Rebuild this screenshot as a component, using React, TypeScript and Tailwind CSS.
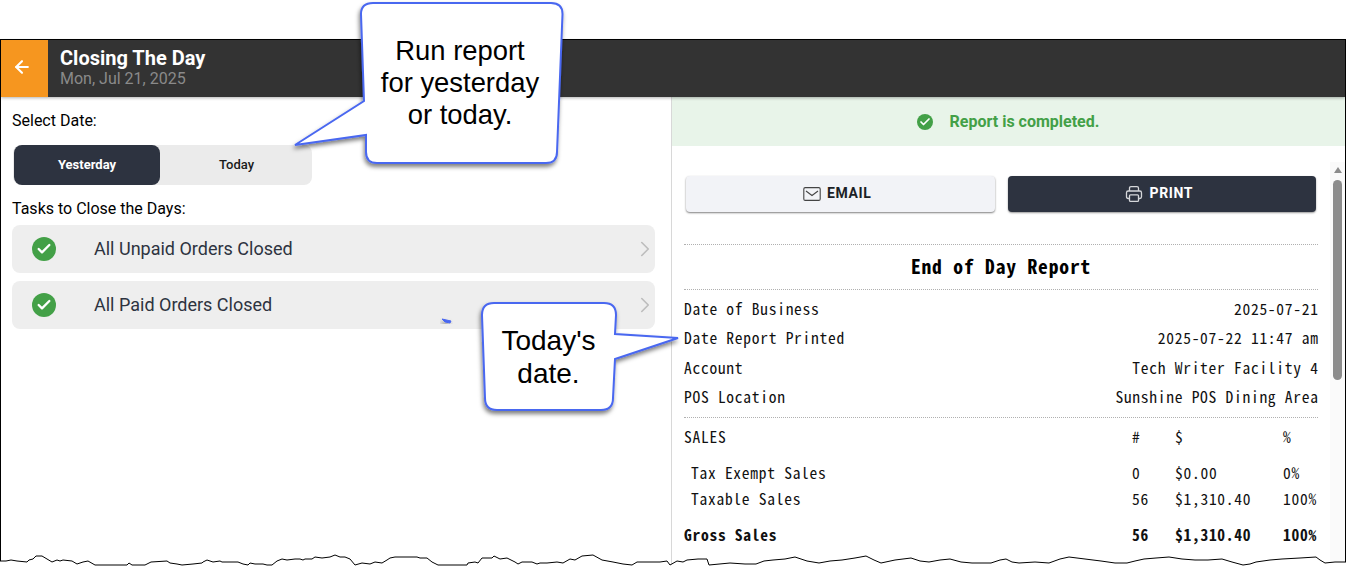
import { ArrowLeft, ChevronRight, Check } from "lucide-react";

const mono = "[font-family:'Noto_Sans_Mono_CJK_SC','DejaVu_Sans_Mono',monospace]";

function CheckBadge({ size }: { size: "lg" | "sm" }) {
  return (
    <span
      className={
        size === "lg"
          ? "flex h-6 w-6 items-center justify-center rounded-full bg-[#43a047]"
          : "flex h-4 w-4 items-center justify-center rounded-full bg-[#43a047]"
      }
    >
      <Check className={size === "lg" ? "h-4 w-4 text-white" : "h-3 w-3 text-white"} strokeWidth={3.5} />
    </span>
  );
}

function Task({ label }: { label: string }) {
  return (
    <div className="flex h-12 items-center rounded-lg bg-[#eeeeee] pl-5">
      <CheckBadge size="lg" />
      <span className="ml-[38px] flex-1 pb-[2px] text-[18px] text-[#2d3340]">{label}</span>
      <ChevronRight className="-mr-[3px] h-[26px] w-[26px] text-[#bdbdbd]" strokeWidth={1.5} />
    </div>
  );
}

function Row({ a, b }: { a: string; b: string }) {
  return (
    <div className="flex h-[29.3px] items-center justify-between">
      <span>{a}</span>
      <span className="-mr-[0.7px]">{b}</span>
    </div>
  );
}

function Sales({ a, n, d, p, cls }: { a: string; n: string; d: string; p: string; cls: string }) {
  return (
    <div className={`grid grid-cols-[448px_43px_108px_1fr] items-center ${cls}`}>
      <span>{a}</span>
      <span>{n}</span>
      <span>{d}</span>
      <span>{p}</span>
    </div>
  );
}

const torn =
  "M0 561 L6 561 L11 560 L17 561 L27 562 L29 560 L33 559 L36 556 L42 556 L47 559 L52 562 L57 560 L60 561 L63 560 L72 561 L77 564 L83 562 L88 561 L95 565 L127 565 L129 563 L132 565 L145 565 L151 562 L167 561 L170 563 L177 564 L182 565 L193 564 L202 563 L203 562 L207 560 L213 562 L220 561 L222 562 L238 562 L243 564 L248 565 L250 563 L255 564 L263 564 L267 565 L272 565 L277 561 L282 559 L287 560 L295 559 L300 559 L303 560 L305 559 L312 559 L315 557 L322 558 L330 557 L335 555 L340 557 L345 557 L350 559 L355 565 L362 563 L370 564 L375 562 L382 563 L387 560 L390 558 L395 557 L400 557 L417 557 L420 558 L427 558 L432 562 L438 565 L467 565 L468 563 L475 562 L478 563 L482 558 L492 558 L494 556 L500 559 L507 558 L515 562 L518 564 L522 562 L532 562 L537 564 L540 563 L547 563 L557 562 L563 563 L570 559 L575 560 L582 556 L593 555 L602 560 L613 562 L623 564 L632 565 L637 562 L660 562 L667 561 L670 565 L677 561 L683 562 L687 560 L698 559 L707 559 L709 565 L730 563 L745 564 L756 564 L764 561 L773 560 L785 559 L795 557 L807 561 L819 563 L830 561 L842 560 L855 558 L866 556 L874 560 L881 563 L895 560 L911 558 L920 561 L929 562 L940 560 L950 559 L961 562 L972 563 L991 563 L1000 560 L1006 559 L1012 562 L1019 563 L1035 562 L1049 563 L1060 559 L1069 557 L1085 559 L1101 561 L1115 563 L1127 563 L1135 561 L1144 559 L1156 558 L1169 557 L1182 559 L1195 560 L1208 560 L1222 559 L1232 562 L1243 565 L1250 564 L1256 562 L1270 560 L1282 559 L1300 558 L1316 557 L1320 560 L1325 563 L1335 562 L1346 562";

export default function App() {
  return (
    <div className="relative h-[566px] w-[1346px] overflow-hidden bg-white font-['Roboto',sans-serif] text-black">
      <div className="pt-[39px]">
        <div className="flex h-[527px] flex-col border-x border-t border-black">
          <header className="relative z-10 flex h-[57px] shrink-0 bg-[#333333] shadow-[0_1px_3px_rgba(0,0,0,0.3)]">
            <div className="flex w-[47px] items-center justify-center bg-[#f6961f] pr-[5px] pb-[3px]">
              <ArrowLeft className="h-5 w-5 text-white" strokeWidth={2.5} />
            </div>
            <div className="ml-3 flex flex-col pt-[7px]">
              <span className="text-[20px] leading-[23px] font-bold text-white">Closing The Day</span>
              <span className="text-[16px] leading-[18px] text-[#8a8a8a]">Mon, Jul 21, 2025</span>
            </div>
          </header>
          <div className="flex min-h-0 flex-1">
            <section className="w-[671px] shrink-0 border-r border-[#d8d8d8] pl-[11px] pr-[16px]">
              <div className="pt-[14px] text-[16px] leading-[19px]">Select Date:</div>
              <div className="mt-[15px] ml-[1px] flex h-10 w-[299px] rounded-lg bg-[#ebebeb] pl-[1px]">
                <div className="flex w-[146px] items-center justify-center rounded-lg bg-[#2d3340] text-[13px] font-bold text-white">
                  Yesterday
                </div>
                <div className="flex flex-1 items-center justify-center pl-[1px] text-[13px] font-medium text-[#1a1a1a]">Today</div>
              </div>
              <div className="mt-[14px] text-[16px] leading-[19px]">Tasks to Close the Days:</div>
              <div className="mt-[7px] flex flex-col gap-2">
                <Task label="All Unpaid Orders Closed" />
                <Task label="All Paid Orders Closed" />
              </div>
            </section>
            <section className="relative min-w-0 flex-1">
              <div className="flex h-[49px] items-center justify-center gap-[17px] bg-[#e8f4e9] pr-[1px]">
                <CheckBadge size="sm" />
                <span className="text-[16px] font-bold text-[#43a047]">Report is completed.</span>
              </div>
              <div className="pl-[12px] pr-[27px]">
                <div className="grid grid-cols-2 gap-[13px] px-[2px] pt-[30px] pb-[32px]">
                  <div className="flex h-9 items-center justify-center gap-[6px] rounded bg-[#f2f3f7] pr-[6px] pb-[1px] text-[14px] font-bold tracking-[0.6px] text-[#1c1f26] shadow-[0_1px_2px_rgba(0,0,0,0.5)]">
                    <svg width="18" height="18" viewBox="0 0 18 18" fill="none" stroke="#444" strokeWidth="1.1">
                      <rect x="0.8" y="2.6" width="16.4" height="12.8" rx="1.4" />
                      <path d="M3 6 L9 10.5 L15 6" />
                    </svg>
                    EMAIL
                  </div>
                  <div className="flex h-9 items-center justify-center gap-[7px] rounded bg-[#2d3340] pr-[6px] pb-[1px] text-[14px] font-bold tracking-[0.6px] text-white shadow-[0_1px_2px_rgba(0,0,0,0.4)]">
                    <svg width="18" height="18" viewBox="0 0 18 18" fill="none" stroke="#d5d7da" strokeWidth="1.3">
                      <path d="M4.5 6 V3.2 Q4.5 1.6 6 1.6 H12 Q13.5 1.6 13.5 3.2 V6" />
                      <path d="M4.5 13.5 H3.2 Q1.5 13.5 1.5 11.8 V7.8 Q1.5 6 3.2 6 H14.8 Q16.5 6 16.5 7.8 V11.8 Q16.5 13.5 14.8 13.5 H13.5" />
                      <rect x="4.5" y="9.8" width="9" height="6.6" rx="1" />
                    </svg>
                    PRINT
                  </div>
                </div>
                <div className={`${mono} text-[15.5px] tracking-[0.72px] text-[#111]`}>
                  <div className="border-y border-dotted border-[#b0b0b0] pt-[9px] pb-[11px] text-center text-[19.5px] leading-[24px] font-bold tracking-[0.85px] text-black">
                    End of Day Report
                  </div>
                  <div className="border-b border-dotted border-[#b0b0b0] pt-[4px] pb-[6px]">
                    <Row a="Date of Business" b="2025-07-21" />
                    <Row a="Date Report Printed" b="2025-07-22 11:47 am" />
                    <Row a="Account" b="Tech Writer Facility 4" />
                    <Row a="POS Location" b="Sunshine POS Dining Area" />
                  </div>
                  <Sales cls="mt-[7px] h-[20px]" a="SALES" n="#" d="$" p="%" />
                  <Sales cls="mt-[16px] h-[20px] [&>span:first-child]:pl-[7px]" a="Tax Exempt Sales" n="0" d="$0.00" p="0%" />
                  <Sales cls="mt-[6px] h-[20px] [&>span:first-child]:pl-[7px]" a="Taxable Sales" n="56" d="$1,310.40" p="100%" />
                  <Sales cls="mt-[16px] h-[20px] font-bold" a="Gross Sales" n="56" d="$1,310.40" p="100%" />
                </div>
              </div>
              <div className="absolute top-[65px] right-0 bottom-0 w-[15px] bg-[#fafafa] pt-[5px] pl-[3px]">
                <div className="ml-[0.5px] h-0 w-0 border-x-[4px] border-b-[6px] border-x-transparent border-b-[#8c8c8c]" />
                <div className="mt-[7px] h-[200px] w-[9px] rounded-full bg-[#8c8c8c]" />
              </div>
            </section>
          </div>
        </div>
      </div>

      {/* torn bottom edge of the screenshot */}
      <svg className="absolute top-0 left-0 z-20" width="1346" height="566" viewBox="0 0 1346 566" fill="none">
        <path d={`${torn} L1346 566 L0 566 Z`} fill="#fff" />
        <path d={torn} stroke="#000" strokeWidth="1" />
      </svg>

      {/* callouts */}
      <svg className="absolute top-0 left-0 z-20" width="1346" height="566" viewBox="0 0 1346 566" fill="none">
        <defs>
          <filter id="sh" x="-20%" y="-20%" width="140%" height="140%">
            <feDropShadow dx="-1" dy="3" stdDeviation="2" floodColor="#000" floodOpacity="0.5" />
          </filter>
        </defs>
        <path
          d="M373 3 H551 Q562.5 3 562.5 14 L557 152 Q557 163 546 163 H377 Q366 163 366 152 L366 135 L295 145 L364 101 L361 14 Q361 3 373 3 Z"
          fill="#fff"
          stroke="#4a67f0"
          strokeWidth="2"
          filter="url(#sh)"
        />
        <path
          d="M494 303 H604 Q616 303 616 315 L615 334 L678 338 L615 359 L613 398 Q613 410 601 410 H497 Q485 410 485 398 L482 315 Q482 303 494 303 Z"
          fill="#fff"
          stroke="#4a67f0"
          strokeWidth="2"
          filter="url(#sh)"
        />
        <path d="M442 319 L451 321 L450 323 L445 322 Z" fill="#4a67f0" stroke="#4a67f0" strokeWidth="1" filter="url(#sh)" />
      </svg>
      <div className="absolute top-[35px] left-[360px] z-20 w-[200px] text-center font-['Liberation_Sans',sans-serif] text-[27.4px] leading-[32px]">
        Run report
        <br />
        for yesterday
        <br />
        or today.
      </div>
      <div className="absolute top-[324px] left-[482px] z-20 w-[133px] text-center font-['Liberation_Sans',sans-serif] text-[28px] leading-[33px]">
        Today's
        <br />
        date.
      </div>
    </div>
  );
}
